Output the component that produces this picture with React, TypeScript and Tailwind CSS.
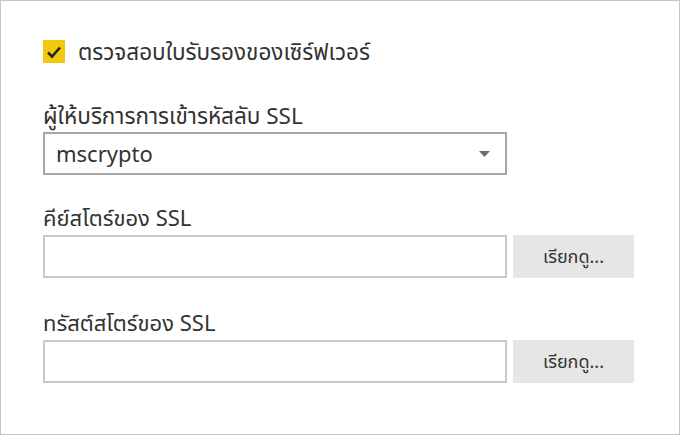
import React from "react";

const font = { fontFamily: '"Segoe UI", "Noto Sans", "Noto Sans Thai", "Open Sans", sans-serif' };

function BrowseRow({ label }: { label: string }) {
  return (
    <div className="flex flex-col">
      <div className="h-[24px] leading-[24px] text-[22px] text-[#333333]">{label}</div>
      <div className="mt-[6px] flex gap-[6px]">
        <div className="h-[43px] w-[464px] border-2 border-[#c8c8c8] bg-white" />
        <button className="flex h-[43px] w-[121px] items-center justify-center bg-[#e6e6e6] text-[18px] text-[#333333]">
          เรียกดู...
        </button>
      </div>
    </div>
  );
}

export default function App() {
  return (
    <div
      className="h-[435px] w-[680px] border border-[#c6c6c6] bg-white pl-[42px] pt-[39px]"
      style={font}
    >
      {/* certificate check */}
      <div className="flex h-[23px] items-center gap-[13px]">
        <div className="flex h-[23px] w-[22px] items-center justify-center bg-[#f2c811]">
          <svg width="16" height="14" viewBox="0 0 16 14">
            <path d="M2 7.5 L6 11.5 L14 2.5" fill="none" stroke="#252423" strokeWidth="2.6" />
          </svg>
        </div>
        <span className="text-[22.5px] leading-[24px] text-[#333333]">ตรวจสอบใบรับรองของเซิร์ฟเวอร์</span>
      </div>

      {/* crypto provider */}
      <div className="mt-[41px] h-[24px] leading-[24px] text-[22.5px] text-[#333333]">
        ผู้ให้บริการการเข้ารหัสลับ SSL
      </div>
      <div className="mt-[4px] flex h-[43px] w-[464px] items-center justify-between border-2 border-[#a6a6a6] pl-[11px] pr-[15px]">
        <span className="text-[22px] text-[#333333]">mscrypto</span>
        <svg width="11" height="6" viewBox="0 0 11 6">
          <path d="M0 0 H11 L5.5 6 Z" fill="#6b6b6b" />
        </svg>
      </div>

      <div className="mt-[30px]">
        <BrowseRow label="คีย์สโตร์ของ SSL" />
      </div>
      <div className="mt-[32px]">
        <BrowseRow label="ทรัสต์สโตร์ของ SSL" />
      </div>
    </div>
  );
}
